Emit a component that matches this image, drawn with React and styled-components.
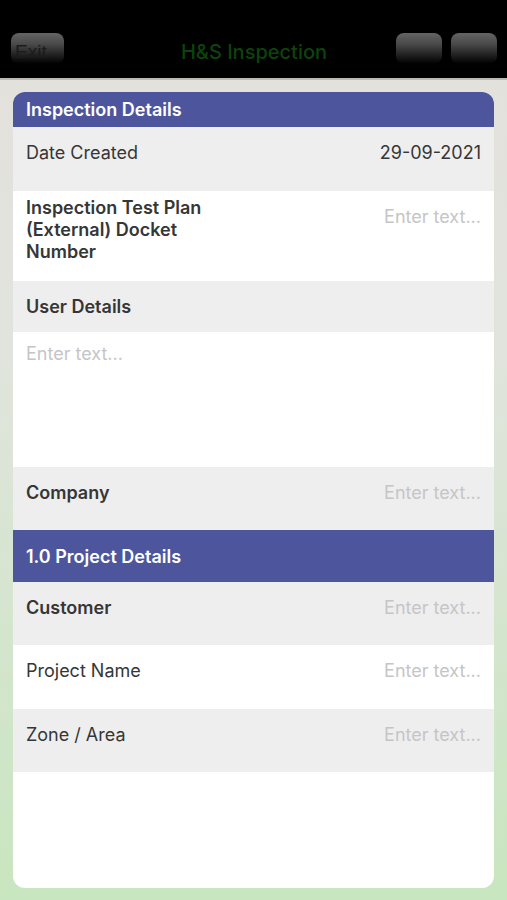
import React from "react";
import styled, {createGlobalStyle} from "styled-components";

const GlobalStyle = createGlobalStyle`
  html, body {
    margin: 0;
    padding: 0;
    background: #000;
  }
  body {
    font-family: Inter, "Open Sans", "Liberation Sans", sans-serif;
  }
`;

const Screen = styled.div`
  width: 507px;
  height: 900px;
  display: flex;
  flex-direction: column;
  overflow: hidden;
`;

const TopBar = styled.div`
  height: 80px;
  background: #000;
  display: grid;
  grid-template-columns: 1fr auto 1fr;
  align-items: start;
  padding: 33px 10px 0 11px;
  box-sizing: border-box;
  border-bottom: 2px solid #bdbab5;
  flex-shrink: 0;
`;

const BarSide = styled.div`
  display: flex;
  gap: 9px;
  justify-content: ${p => (p.$end ? "flex-end" : "flex-start")};
`;

const BarButton = styled.button`
  width: ${p => p.$width || 46}px;
  height: 31px;
  border: none;
  border-radius: 8px;
  background: linear-gradient(#646464 0%, #4a4a4a 35%, #1c1c1c 75%, #000 100%);
  color: #1c1c1c;
  font: 19px "Liberation Sans", Arial, sans-serif;
  text-align: left;
  padding: 7px 0 0 4px;
  flex-shrink: 0;
`;

const Title = styled.div`
  text-align: center;
  color: #0c440c;
  font-size: 20px;
  font-weight: 500;
  padding-top: 7px;
`;

const Body = styled.div`
  flex: 1;
  background: linear-gradient(#e3e1dc 0%, #e0e4dc 35%, #c8e6bf 100%);
  padding: 12px 13px 12px 13px;
  display: flex;
`;

const Card = styled.div`
  flex: 1;
  background: #fff;
  border-radius: 12px;
  overflow: hidden;
  display: flex;
  flex-direction: column;
`;

const Header = styled.div`
  height: ${p => p.$height}px;
  background: #4d569d;
  color: #fff;
  font-size: 18px;
  font-weight: 600;
  padding: 0 13px;
  display: flex;
  align-items: center;
  flex-shrink: 0;
`;

const Row = styled.div`
  height: ${p => p.$height}px;
  background: ${p => (p.$gray ? "#eeeeee" : "#fff")};
  display: flex;
  justify-content: space-between;
  align-items: flex-start;
  padding: 15px 13px 0 13px;
  box-sizing: border-box;
  flex-shrink: 0;
`;

const Label = styled.div`
  color: #363636;
  font-size: 18px;
  line-height: 22px;
  font-weight: ${p => (p.$bold ? 600 : 400)};
  margin-top: ${p => p.$shift || 0}px;
  max-width: 200px;
`;

const Value = styled.div`
  color: #363636;
  font-size: 18px;
  line-height: 22px;
`;

const Placeholder = styled.div`
  color: #c5c5c7;
  font-size: 18px;
  line-height: 22px;
`;

const TextArea = styled.div`
  height: 135px;
  background: #fff;
  padding: 11px 13px 0;
  box-sizing: border-box;
  flex-shrink: 0;
`;

export default function App() {
  return (
    <Screen>
      <GlobalStyle/>
      <TopBar>
        <BarSide>
          <BarButton $width={53}>Exit</BarButton>
        </BarSide>
        <Title>H&amp;S Inspection</Title>
        <BarSide $end>
          <BarButton/>
          <BarButton/>
        </BarSide>
      </TopBar>
      <Body>
        <Card>
          <Header $height={35}>Inspection Details</Header>
          <Row $gray $height={64}>
            <Label>Date Created</Label>
            <Value>29-09-2021</Value>
          </Row>
          <Row $height={90}>
            <Label $bold $shift={-9}>Inspection Test Plan (External) Docket Number</Label>
            <Placeholder>Enter text...</Placeholder>
          </Row>
          <Row $gray $height={51}>
            <Label $bold>User Details</Label>
          </Row>
          <TextArea>
            <Placeholder>Enter text...</Placeholder>
          </TextArea>
          <Row $gray $height={63}>
            <Label $bold>Company</Label>
            <Placeholder>Enter text...</Placeholder>
          </Row>
          <Header $height={52}>1.0 Project Details</Header>
          <Row $gray $height={63}>
            <Label $bold>Customer</Label>
            <Placeholder>Enter text...</Placeholder>
          </Row>
          <Row $height={64}>
            <Label>Project Name</Label>
            <Placeholder>Enter text...</Placeholder>
          </Row>
          <Row $gray $height={63}>
            <Label>Zone / Area</Label>
            <Placeholder>Enter text...</Placeholder>
          </Row>
        </Card>
      </Body>
    </Screen>
  );
}
